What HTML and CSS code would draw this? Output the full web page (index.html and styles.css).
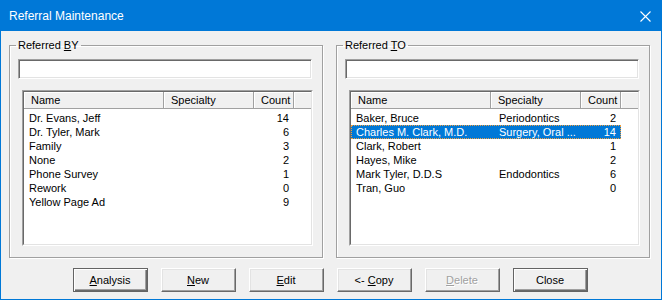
FILE: index.html
```html
<!DOCTYPE html>
<html lang="en">
<head>
    <meta charset="UTF-8">
    <title>Referral Maintenance</title>
    <link rel="stylesheet" href="styles.css">
</head>
<body>
    <div class="window">
        <div class="titlebar">
            <span class="title">Referral Maintenance</span>
            <svg class="close" width="11" height="11" viewBox="0 0 11 11">
                <path d="M0.5 0.5 L10.5 10.5 M10.5 0.5 L0.5 10.5" stroke="#ffffff" stroke-width="1.1" fill="none"/>
            </svg>
        </div>

        <div class="content">
            <div class="groups">
                <fieldset class="group">
                    <legend>Referred <u>B</u>Y</legend>
                    <input class="search" type="text">
                    <div class="listview">
                        <div class="lv-inner">
                            <div class="lv-header">
                                <div class="col name">Name</div>
                                <div class="col spec">Specialty</div>
                                <div class="col count">Count</div>
                                <div class="col fill"></div>
                            </div>
                            <div class="lv-rows">
                                <div class="row"><span class="name">Dr. Evans, Jeff</span><span class="spec"></span><span class="count">14</span></div>
                                <div class="row"><span class="name">Dr. Tyler, Mark</span><span class="spec"></span><span class="count">6</span></div>
                                <div class="row"><span class="name">Family</span><span class="spec"></span><span class="count">3</span></div>
                                <div class="row"><span class="name">None</span><span class="spec"></span><span class="count">2</span></div>
                                <div class="row"><span class="name">Phone Survey</span><span class="spec"></span><span class="count">1</span></div>
                                <div class="row"><span class="name">Rework</span><span class="spec"></span><span class="count">0</span></div>
                                <div class="row"><span class="name">Yellow Page Ad</span><span class="spec"></span><span class="count">9</span></div>
                            </div>
                        </div>
                    </div>
                </fieldset>

                <fieldset class="group">
                    <legend>Referred <u>T</u>O</legend>
                    <input class="search" type="text">
                    <div class="listview">
                        <div class="lv-inner">
                            <div class="lv-header">
                                <div class="col name">Name</div>
                                <div class="col spec">Specialty</div>
                                <div class="col count">Count</div>
                                <div class="col fill"></div>
                            </div>
                            <div class="lv-rows">
                                <div class="row"><span class="name">Baker, Bruce</span><span class="spec">Periodontics</span><span class="count">2</span></div>
                                <div class="row selected"><span class="name">Charles M. Clark, M.D.</span><span class="spec">Surgery, Oral ...</span><span class="count">14</span></div>
                                <div class="row"><span class="name">Clark, Robert</span><span class="spec"></span><span class="count">1</span></div>
                                <div class="row"><span class="name">Hayes, Mike</span><span class="spec"></span><span class="count">2</span></div>
                                <div class="row"><span class="name">Mark Tyler, D.D.S</span><span class="spec">Endodontics</span><span class="count">6</span></div>
                                <div class="row"><span class="name">Tran, Guo</span><span class="spec"></span><span class="count">0</span></div>
                            </div>
                        </div>
                    </div>
                </fieldset>
            </div>

            <div class="buttons">
                <button class="btn default"><u>A</u>nalysis</button>
                <button class="btn"><u>N</u>ew</button>
                <button class="btn"><u>E</u>dit</button>
                <button class="btn">&lt;- <u>C</u>opy</button>
                <button class="btn" disabled><u>D</u>elete</button>
                <button class="btn default">Close</button>
            </div>
        </div>
    </div>
</body>
</html>
```

FILE: styles.css
```css
html, body {
    margin: 0;
    padding: 0;
    background-color: #f0f0f0;
    font-family: "Liberation Sans", Arial, sans-serif;
    font-size: 11px;
    color: #000000;
}

.window {
    width: 662px;
    height: 300px;
    box-sizing: border-box;
    border: 1px solid #0078d7;
    background-color: #f0f0f0;
}

.titlebar {
    height: 30px;
    background-color: #0078d7;
    color: #ffffff;
    display: flex;
    align-items: center;
    justify-content: space-between;
    padding: 0 10px 0 8px;
}

.title {
    font-size: 12px;
}

.content {
    padding: 8px 10px 0 8px;
}

.groups {
    display: flex;
    gap: 13px;
}

.group {
    width: 314px;
    min-width: 0;
    box-sizing: border-box;
    margin: 0;
    padding: 7px 10px 11px 8px;
    border: 1px solid #a0a0a0;
    box-shadow: inset 1px 1px 0 #ffffff, 1px 1px 0 #ffffff;
}

.group legend {
    margin-left: -2px;
    padding: 0 2px;
    line-height: 13px;
}

.search {
    display: block;
    width: 294px;
    height: 20px;
    box-sizing: border-box;
    margin: 0;
    padding: 0;
    border: 1px solid;
    border-color: #a0a0a0 #ffffff #ffffff #a0a0a0;
    box-shadow: inset 1px 1px 0 #696969, inset -1px -1px 0 #e3e3e3;
    background-color: #ffffff;
}

.listview {
    margin: 11px 0 0 4px;
    width: 291px;
    height: 156px;
    box-sizing: border-box;
    border: 1px solid;
    border-color: #a0a0a0 #ffffff #ffffff #a0a0a0;
}

.lv-inner {
    height: 100%;
    box-sizing: border-box;
    border: 1px solid;
    border-color: #696969 #e3e3e3 #e3e3e3 #696969;
    background-color: #ffffff;
}

.lv-header {
    display: flex;
    height: 17px;
    background-color: #f0f0f0;
}

.lv-header .col {
    box-sizing: border-box;
    height: 17px;
    line-height: 16px;
    padding-left: 7px;
    border-right: 1px solid #a0a0a0;
    border-bottom: 1px solid #a0a0a0;
    box-shadow: inset 1px 1px 0 #ffffff;
}

.lv-header .name { width: 140px; }
.lv-header .spec { width: 90px; }
.lv-header .count { width: 40px; }

.lv-header .fill {
    flex: 1;
    border-right: none;
}

.lv-rows {
    padding-top: 2px;
}

.row {
    display: flex;
    width: 270px;
    height: 14px;
    line-height: 14px;
    white-space: nowrap;
}

.row span {
    box-sizing: border-box;
    overflow: hidden;
}

.row .name {
    width: 140px;
    padding-left: 5px;
}

.row .spec {
    width: 90px;
    padding-left: 8px;
}

.row .count {
    width: 40px;
    padding-right: 5px;
    text-align: right;
}

.row.selected {
    background-color: #0078d7;
    color: #ffffff;
    outline: 1px dotted #f0a040;
    outline-offset: -1px;
}

.buttons {
    display: flex;
    justify-content: center;
    gap: 13px;
    margin-top: 10px;
}

.btn {
    width: 75px;
    height: 24px;
    box-sizing: border-box;
    margin: 0;
    padding: 0;
    font-family: "Liberation Sans", Arial, sans-serif;
    font-size: 11px;
    color: #000000;
    background-color: #f0f0f0;
    border: 1px solid;
    border-color: #ffffff #696969 #696969 #ffffff;
    box-shadow: inset -1px -1px 0 #a0a0a0, inset 1px 1px 0 #e3e3e3;
}

.btn.default {
    border-color: #646464;
    box-shadow: inset 1px 1px 0 #ffffff, inset -1px -1px 0 #696969, inset -2px -2px 0 #a0a0a0;
}

.btn:disabled {
    color: #a0a0a0;
    text-shadow: 1px 1px 0 #ffffff;
}
```
